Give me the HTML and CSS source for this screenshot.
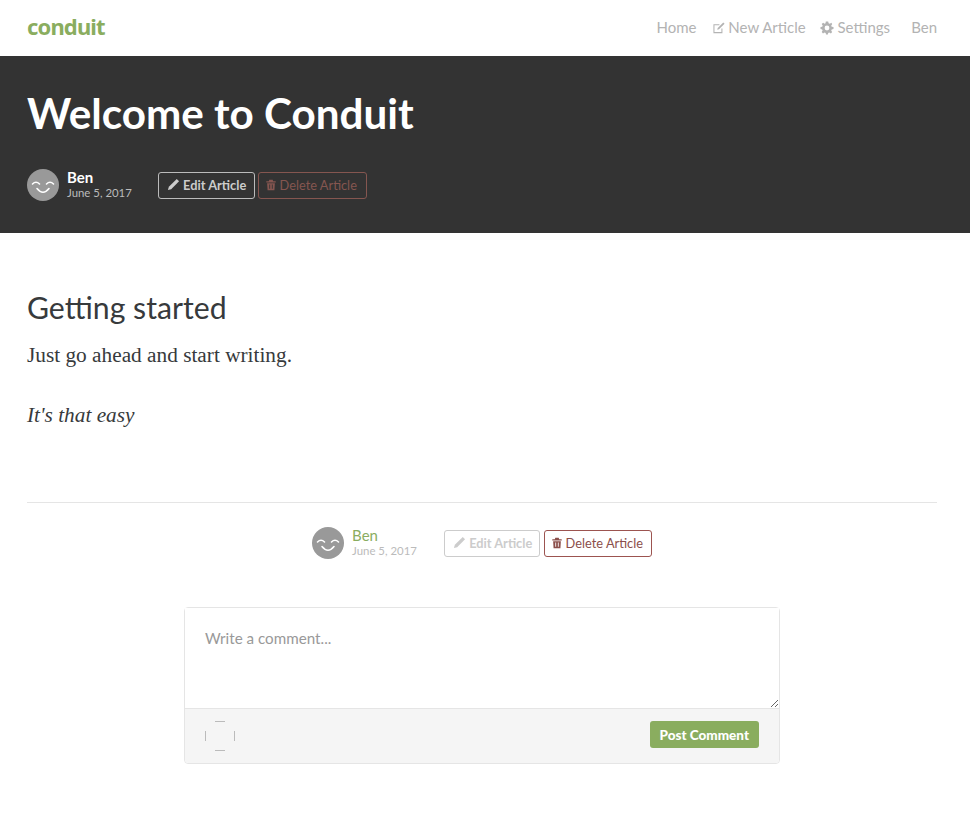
FILE: index.html
```html
<!DOCTYPE html>
<html lang="en">
<head>
    <meta charset="UTF-8">
    <meta name="viewport" content="width=device-width, initial-scale=1.0">
    <title>Welcome to Conduit</title>
    <link rel="stylesheet" href="styles.css">
</head>
<body>

    <!-- Top navigation -->
    <nav class="navbar">
        <a class="brand" href="#">conduit</a>
        <ul class="nav-links">
            <li><a href="#">Home</a></li>
            <li>
                <a href="#">
                    <svg class="icon" viewBox="0 0 14 14"><path d="M11 7.5V13H.5V2.5H7.5V3.7H1.7V11.8H9.8V7.5Z"/><path d="M12 .5L13.5 2 7 8.5 5 9 5.5 7Z"/></svg>
                    New Article
                </a>
            </li>
            <li>
                <a href="#">
                    <svg class="icon icon-gear" viewBox="0 0 14 14"><path fill-rule="evenodd" d="M5.8.5H8.2L8.6 2.3 9.8 2.8 11.3 1.8 12.2 3.1 11.2 4.7 11.7 5.8 13.5 6.1V8.1L11.7 8.5 11.2 9.7 12.2 11.1 10.9 12.4 9.3 11.5 8.2 11.9 7.9 13.5H6L5.7 11.9 4.5 11.5 3 12.4 1.7 11.1 2.6 9.6 2.2 8.4.5 8.1V6.1L2.2 5.7 2.7 4.6 1.7 3.1 3.1 1.8 4.6 2.7 5.5 2.2ZM7 4.6A2.4 2.4 0 1 0 7 9.4 2.4 2.4 0 1 0 7 4.6Z"/></svg>
                    Settings
                </a>
            </li>
            <li><a href="#">Ben</a></li>
        </ul>
    </nav>

    <!-- Article banner -->
    <header class="banner">
        <h1>Welcome to Conduit</h1>
        <div class="article-meta">
            <svg class="avatar" viewBox="0 0 32 32"><circle cx="16" cy="16" r="16" fill="#999"/><path d="M5.5 15Q9 11.5 12.5 15M19.5 15Q23 11.5 26.500 15M10 19.5Q16 27 22 19.5" fill="none" stroke="#fff" stroke-width="1.6" stroke-linecap="round"/></svg>
            <div class="info">
                <a class="author" href="#">Ben</a>
                <span class="date">June 5, 2017</span>
            </div>
            <div class="actions">
                <button class="btn btn-edit-dark">
                    <svg class="icon" viewBox="0 0 14 14"><path d="M10.5 1L13 3.5 4.5 12 1 13 2 9.5Z"/></svg>
                    Edit Article
                </button>
                <button class="btn btn-delete-dark">
                    <svg class="icon icon-trash" viewBox="0 0 14 14"><path fill-rule="evenodd" d="M5 1H9L9.5 2.5H12.5V4H1.5V2.5H4.5ZM2.5 5H11.5L11 13H3ZM5 6.5V11.5H6V6.5ZM8 6.5V11.5H9V6.5Z"/></svg>
                    Delete Article
                </button>
            </div>
        </div>
    </header>

    <main class="page">
        <!-- Article body -->
        <section class="article-content">
            <h2>Getting started</h2>
            <p>Just go ahead and start writing.</p>
            <p><em>It's that easy</em></p>
        </section>

        <hr class="divider">

        <div class="article-meta article-meta-light">
            <svg class="avatar" viewBox="0 0 32 32"><circle cx="16" cy="16" r="16" fill="#999"/><path d="M5.5 15Q9 11.5 12.5 15M19.5 15Q23 11.5 26.5 15M10 19.5Q16 27 22 19.5" fill="none" stroke="#fff" stroke-width="1.6" stroke-linecap="round"/></svg>
            <div class="info">
                <a class="author" href="#">Ben</a>
                <span class="date">June 5, 2017</span>
            </div>
            <div class="actions">
                <button class="btn btn-edit">
                    <svg class="icon" viewBox="0 0 14 14"><path d="M10.5 1L13 3.5 4.5 12 1 13 2 9.5Z"/></svg>
                    Edit Article
                </button>
                <button class="btn btn-delete">
                    <svg class="icon icon-trash" viewBox="0 0 14 14"><path fill-rule="evenodd" d="M5 1H9L9.5 2.5H12.5V4H1.5V2.5H4.5ZM2.5 5H11.5L11 13H3ZM5 6.5V11.5H6V6.5ZM8 6.5V11.5H9V6.5Z"/></svg>
                    Delete Article
                </button>
            </div>
        </div>

        <!-- Comment form -->
        <form class="comment-card">
            <textarea class="comment-input" placeholder="Write a comment..."></textarea>
            <div class="comment-footer">
                <svg class="comment-avatar" viewBox="0 0 30 30"><path d="M10 .5H20M10 29.5H20M.5 10V20M29.5 10V20" stroke="#bbb" fill="none"/></svg>
                <button class="btn-post" type="button">Post Comment</button>
            </div>
        </form>
    </main>

</body>
</html>
```

FILE: styles.css
```css
* {
    box-sizing: border-box;
}
body {
    margin: 0;
    font-family: Lato, "Noto Sans", sans-serif;
    color: #373a3c;
    background-color: #fff;
}
a {
    text-decoration: none;
}
.icon {
    width: 13px;
    height: 13px;
    fill: currentColor;
    vertical-align: -1px;
}
.icon-trash {
    width: 12px;
    height: 12px;
    margin: 0 -1px 0 -2px;
}

/* Navbar */
.navbar {
    height: 56px;
    padding: 0 33px 3px 27px;
    display: flex;
    justify-content: space-between;
    align-items: center;
}
.brand {
    margin-bottom: 2px;
    font-family: "Noto Sans", sans-serif;
    font-size: 22px;
    font-weight: 700;
    color: #8aad5f;
    letter-spacing: -0.85px;
}
.nav-links {
    list-style: none;
    margin: 0;
    padding: 0;
    display: flex;
    gap: 16px;
}
.nav-links a {
    font-size: 15px;
    color: #b3b3b3;
}
.nav-links .icon {
    width: 12px;
    height: 12px;
}
.nav-links .icon-gear {
    width: 14px;
    height: 14px;
    margin-left: -2px;
    vertical-align: -2px;
}
.nav-links li:last-child {
    margin-left: 5px;
}

/* Banner */
.banner {
    height: 177px;
    padding: 32px 27px 0;
    background-color: #333;
}
.banner h1 {
    margin: 0 0 31px;
    font-size: 42.2px;
    line-height: 50px;
    font-weight: 700;
    color: #fff;
}

/* Author block + buttons */
.article-meta {
    display: flex;
    align-items: center;
}
.article-meta-light {
    justify-content: center;
    margin-top: 24px;
}
.avatar {
    width: 32px;
    height: 32px;
    flex: none;
}
.info {
    margin-left: 8px;
    display: flex;
    flex-direction: column;
    width: 83px;
    line-height: 16px;
}
.author {
    font-size: 15px;
    font-weight: 700;
    color: #fff;
}
.date {
    font-size: 11.4px;
    color: #bbb;
}
.article-meta-light .info {
    width: 84px;
}
.article-meta-light .author {
    font-weight: 400;
    color: #8aad5f;
}
.actions {
    margin-left: 8px;
    display: flex;
    gap: 3px;
}
.article-meta-light .actions {
    gap: 4px;
}

/* Buttons */
.btn {
    height: 27px;
    padding: 0 8px;
    font-family: inherit;
    font-size: 12.8px;
    background: none;
    border: 1px solid;
    border-radius: 3px;
    white-space: nowrap;
}
.btn-edit-dark {
    font-weight: 700;
    color: #ccc;
    border-color: #bbb;
}
.btn-delete-dark {
    padding-right: 9px;
    color: #855650;
    border-color: #855650;
}
.btn-edit {
    padding-right: 7px;
    font-weight: 700;
    color: #ccc;
    border-color: #ccc;
}
.btn-delete {
    color: #8b4e4a;
    border-color: #9c5450;
}

/* Article text */
.page {
    padding: 0 33px 0 27px;
}
.article-content {
    padding-top: 53px;
    height: 269px;
}
.article-content h2 {
    margin: 0 0 12px;
    font-size: 30.2px;
    line-height: 42px;
    font-weight: 400;
    color: #373a3c;
}
.article-content p {
    margin: 0 0 30px;
    font-family: "Liberation Serif", serif;
    font-size: 21.3px;
    line-height: 30px;
}
.divider {
    margin: 0;
    border: 0;
    border-top: 1px solid #e5e5e5;
}

/* Comment card */
.comment-card {
    width: 596px;
    margin: 48px 0 0 157px;
    border: 1px solid #e5e5e5;
    border-radius: 4px;
}
.comment-input {
    display: block;
    width: 100%;
    height: 100px;
    padding: 21px 20px 20px;
    border: 0;
    resize: vertical;
    outline: none;
    font-family: Lato, sans-serif;
    font-size: 15.2px;
}
.comment-input::placeholder {
    color: #999;
}
.comment-footer {
    height: 55px;
    padding: 12px 20px;
    display: flex;
    justify-content: space-between;
    align-items: flex-start;
    background-color: #f5f5f5;
    border-top: 1px solid #e5e5e5;
    border-radius: 0 0 4px 4px;
}
.comment-avatar {
    width: 30px;
    height: 30px;
}
.btn-post {
    height: 27px;
    padding: 0 10px;
    font-family: inherit;
    font-size: 13.5px;
    font-weight: 900;
    color: #fff;
    background-color: #8aad5f;
    border: 0;
    border-radius: 3px;
}
```
